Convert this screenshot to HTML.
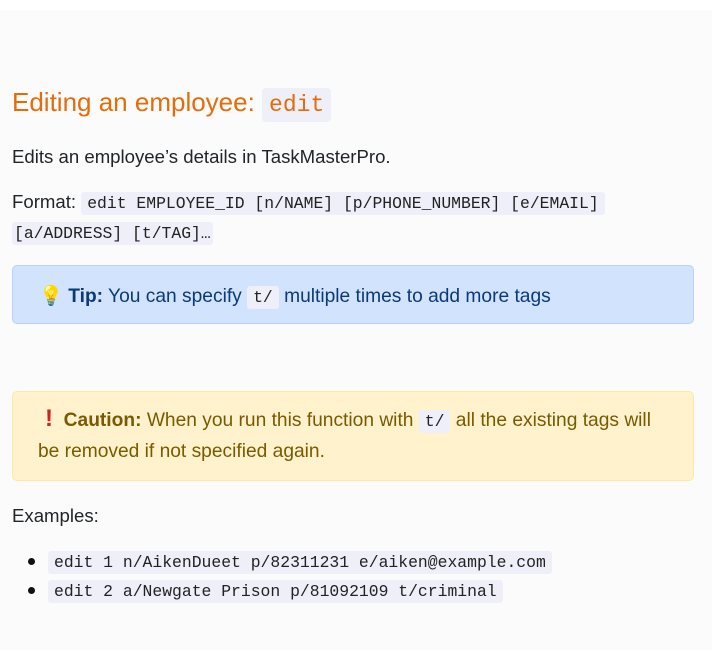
<!DOCTYPE html>
<html><head><meta charset="utf-8"><style>
html,body{margin:0;padding:0;background:#fff;}
body{width:726px;height:640px;overflow:hidden;position:relative;font-family:"Liberation Sans","DejaVu Sans",sans-serif;color:#212529;font-size:18.6px;}
.bg{position:absolute;left:0;top:10px;width:712px;height:640px;background:#fbfbfb;}
.a{position:absolute;white-space:nowrap;}
code{font-family:"Liberation Mono","DejaVu Sans Mono",monospace;font-size:16.4px;background:#efeffa;border-radius:3px;padding:2px 6px;color:#222;}
h1{font-weight:normal;font-size:26px;color:#e46c0a;margin:0;}
h1 code{font-size:23px;color:#e46c0a;padding:4px 7px;border-radius:4px;}
.tip{position:absolute;left:12px;top:265px;width:680px;height:57px;background:#d1e3fd;border:1px solid #b6d3fb;border-radius:5px;color:#0b3a7a;font-size:19.2px;}
.cau{position:absolute;left:12px;top:391px;width:680px;height:88px;background:#fff2cd;border:1px solid #ffe8a6;border-radius:5px;color:#7a5a00;font-size:19.2px;}
.bul{position:absolute;left:28px;width:7px;height:7px;border-radius:50%;background:#111;}
.ex{color:#d42020;font-weight:bold;font-size:24px;line-height:0;}
</style></head><body>
<div class="bg"></div>
<div class="a" style="left:12px;top:87px;"><h1>Editing an employee: <code>edit</code></h1></div>
<div class="a" style="left:12px;top:146px;">Edits an employee’s details in TaskMasterPro.</div>
<div class="a" style="left:12px;top:191px;">Format: <code>edit EMPLOYEE_ID [n/NAME] [p/PHONE_NUMBER] [e/EMAIL]</code></div>
<div class="a" style="left:12px;top:221px;"><code style="padding:2px 2px;">[a/ADDRESS] [t/TAG]…</code></div>
<div class="tip"><div class="a" style="left:26px;top:18px;"><span style="color:#f5c518">💡</span> <b>Tip:</b> You can specify <code>t/</code> multiple times to add more tags</div></div>
<div class="cau"><div class="a" style="left:32px;top:18px;"><span class="ex">!</span>&nbsp; <b>Caution:</b> When you run this function with <code>t/</code> all the existing tags will</div>
<div class="a" style="left:25px;top:49px;">be removed if not specified again.</div></div>
<div class="a" style="left:12px;top:505px;">Examples:</div>
<div class="bul" style="top:558px"></div>
<div class="a" style="left:48px;top:550px;"><code>edit 1 n/AikenDueet p/82311231 e/aiken@example.com</code></div>
<div class="bul" style="top:587px"></div>
<div class="a" style="left:48px;top:579px;"><code>edit 2 a/Newgate Prison p/81092109 t/criminal</code></div>
</body></html>
